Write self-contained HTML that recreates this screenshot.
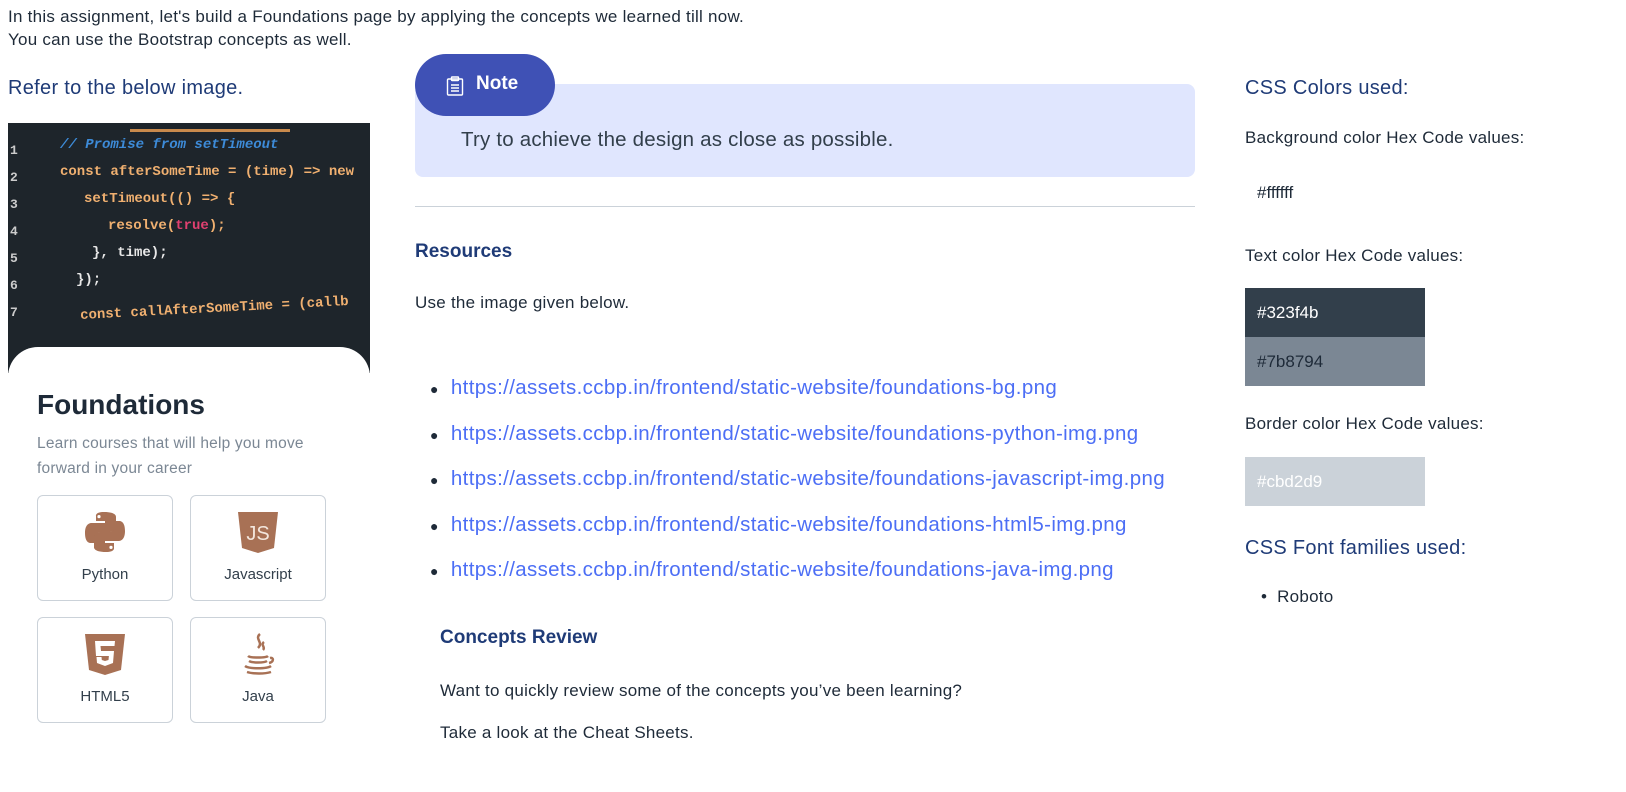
<!DOCTYPE html>
<html><head><style>
body{margin:0;width:1626px;height:792px;overflow:hidden;background:#fff;font-family:"Liberation Sans",sans-serif;color:#323f4b;position:relative}
.a{position:absolute;white-space:nowrap}
.t{font-size:17px;color:#1e2a38;letter-spacing:0.25px}
.blue{color:#1f3b77;font-size:20px;letter-spacing:0.3px}
.link{color:#4c6ef5;font-size:20.5px;letter-spacing:0.35px}
.card{position:absolute;width:134px;height:104px;border:1px solid #cbd2d9;border-radius:6px;text-align:center;font-size:15px;color:#323f4b;background:#fff}
.card svg{display:block;margin:14px auto 12px}
.code{font-family:"Liberation Mono",monospace;font-size:14px;font-weight:bold;white-space:pre;position:absolute;left:0}
.sw{position:absolute;left:1245px;width:180px;height:49px;line-height:49px;padding-left:12px;box-sizing:border-box;font-size:17px}
</style></head><body>
<div class="a t" style="left:8px;top:5px;line-height:23px">In this assignment, let's build a Foundations page by applying the concepts we learned till now.<br>You can use the Bootstrap concepts as well.</div>
<div class="a blue" style="left:8px;top:77px">Refer to the below image.</div>

<div class="a" style="left:8px;top:123px;width:362px;height:250px;background:#1e252b;overflow:hidden">
<div class="a" style="left:122px;top:6px;width:160px;height:3px;background:#c98a4c"></div>
<div class="code" style="top:14px;color:#ccc;left:2px;line-height:27px;font-size:13px">1<br>2<br>3<br>4<br>5<br>6<br>7</div>
<div class="code" style="left:52px;top:14px;color:#3d8bd8;font-style:italic">// Promise from setTimeout</div>
<div class="code" style="left:52px;top:41px;color:#f0b070">const afterSomeTime = (time) =&gt; new</div>
<div class="code" style="left:76px;top:68px;color:#f0b070">setTimeout(() =&gt; {</div>
<div class="code" style="left:100px;top:95px;color:#f0b070">resolve(<span style="color:#e04070">true</span>);</div>
<div class="code" style="left:84px;top:122px;color:#e8e8e8">}, time);</div>
<div class="code" style="left:68px;top:149px;color:#e8e8e8">});</div>
<div class="code" style="left:72px;top:178px;color:#f0b070;transform:rotate(-3deg)">const callAfterSomeTime = (callb</div>
</div>
<div class="a" style="left:8px;top:347px;width:362px;height:420px;background:#fff;border-radius:30px 30px 0 0"></div>
<div class="a" style="left:37px;top:389px;font-size:28px;font-weight:bold;color:#1e2a38">Foundations</div>
<div class="a" style="left:37px;top:431px;font-size:15.5px;color:#7b8794;line-height:25px;letter-spacing:.2px">Learn courses that will help you move<br>forward in your career</div>
<div class="card" style="left:37px;top:495px">
<svg width="44" height="44" viewBox="0 0 44 44"><path fill="#a87155" d="M21 2c-9 0-8 4-8 4v5h9v2H9s-7-1-7 10 6 10 6 10h4v-5s0-6 6-6h9s6 0 6-6V7s1-5-12-5zm-5 3a1.6 1.6 0 110 3.2A1.6 1.6 0 0116 5z"/><path fill="#a87155" d="M23 42c9 0 8-4 8-4v-5h-9v-2h13s7 1 7-10-6-10-6-10h-4v5s0 6-6 6h-9s-6 0-6 6v9s-1 5 12 5zm5-3a1.6 1.6 0 110-3.2 1.6 1.6 0 010 3.2z"/></svg>Python</div>
<div class="card" style="left:190px;top:495px">
<svg width="44" height="44" viewBox="0 0 44 44"><path fill="#a87155" d="M2 2h40l-4 36-16 5-16-5z"/><text x="22" y="30" font-size="20" fill="#f3e6dc" text-anchor="middle" font-family="Liberation Sans">JS</text></svg>Javascript</div>
<div class="card" style="left:37px;top:617px">
<svg width="44" height="44" viewBox="0 0 44 44"><path fill="#a87155" d="M2 2h40l-4 36-16 5-16-5z"/><path fill="#fff" d="M12 9h20l-.5 5H17.5l.5 5h13l-1 12-8 3-8-3-.5-6h5l.3 3 3.2 1 3.5-1 .4-4H13z"/></svg>HTML5</div>
<div class="card" style="left:190px;top:617px">
<svg width="44" height="44" viewBox="0 0 44 44" fill="none" stroke="#a87155" stroke-width="2.5"><path d="M24 2c-6 5 4 8-2 14M28 10c-4 3 2 5-1 8"/><path d="M12 24c2 2 18 2 20 0M13 29c3 2 15 2 18 0M9 34c4 3 22 3 26 0M34 26c4-1 4 4-1 5M11 40c6 2 18 2 24 0"/></svg>Java</div>

<div class="a" style="left:415px;top:84px;width:780px;height:93px;background:#e0e6fe;border-radius:8px"></div>
<div class="a" style="left:415px;top:54px;width:140px;height:62px;background:#3f51b5;border-radius:31px"></div>
<svg class="a" style="left:446px;top:76px" width="18" height="20" viewBox="0 0 18 20" fill="none" stroke="#fff" stroke-width="1.4"><rect x="1.5" y="3" width="15" height="16" rx="1"/><rect x="5.5" y="1" width="7" height="3.5" rx=".5"/><path d="M5 9h8M5 12h8M5 15h8"/></svg>
<div class="a" style="left:476px;top:73px;color:#fff;font-size:19px;font-weight:bold">Note</div>
<div class="a" style="left:461px;top:128px;font-size:20.5px;color:#323f4b;letter-spacing:.2px">Try to achieve the design as close as possible.</div>
<div class="a" style="left:415px;top:206px;width:780px;height:1px;background:#cbd2d9"></div>
<div class="a blue" style="left:415px;top:241px;font-size:19px;font-weight:bold;letter-spacing:0">Resources</div>
<div class="a t" style="left:415px;top:293px">Use the image given below.</div>
<div class="a" style="left:430px;top:366px;line-height:43.5px">
<div class="link"><span style="color:#1e2a38;font-size:14px">●</span>&nbsp;&nbsp;https://assets.ccbp.in/frontend/static-website/foundations-bg.png</div>
<div class="link"><span style="color:#1e2a38;font-size:14px">●</span>&nbsp;&nbsp;https://assets.ccbp.in/frontend/static-website/foundations-python-img.png</div>
<div class="link"><span style="color:#1e2a38;font-size:14px">●</span>&nbsp;&nbsp;https://assets.ccbp.in/frontend/static-website/foundations-javascript-img.png</div>
<div class="link"><span style="color:#1e2a38;font-size:14px">●</span>&nbsp;&nbsp;https://assets.ccbp.in/frontend/static-website/foundations-html5-img.png</div>
<div class="link"><span style="color:#1e2a38;font-size:14px">●</span>&nbsp;&nbsp;https://assets.ccbp.in/frontend/static-website/foundations-java-img.png</div>
</div>
<div class="a blue" style="left:440px;top:627px;font-size:19px;font-weight:bold;letter-spacing:0">Concepts Review</div>
<div class="a t" style="left:440px;top:681px">Want to quickly review some of the concepts you’ve been learning?</div>
<div class="a t" style="left:440px;top:723px">Take a look at the Cheat Sheets.</div>

<div class="a blue" style="left:1245px;top:77px">CSS Colors used:</div>
<div class="a t" style="left:1245px;top:128px">Background color Hex Code values:</div>
<div class="sw" style="top:168px;background:#fff;color:#1e2a38">#ffffff</div>
<div class="a t" style="left:1245px;top:246px">Text color Hex Code values:</div>
<div class="sw" style="top:288px;background:#323f4b;color:#fff">#323f4b</div>
<div class="sw" style="top:337px;background:#7b8794;color:#1e2a38">#7b8794</div>
<div class="a t" style="left:1245px;top:414px">Border color Hex Code values:</div>
<div class="sw" style="top:457px;background:#cbd2d9;color:#fff">#cbd2d9</div>
<div class="a blue" style="left:1245px;top:537px">CSS Font families used:</div>
<div class="a t" style="left:1261px;top:587px">•&nbsp;&nbsp;Roboto</div>
</body></html>
